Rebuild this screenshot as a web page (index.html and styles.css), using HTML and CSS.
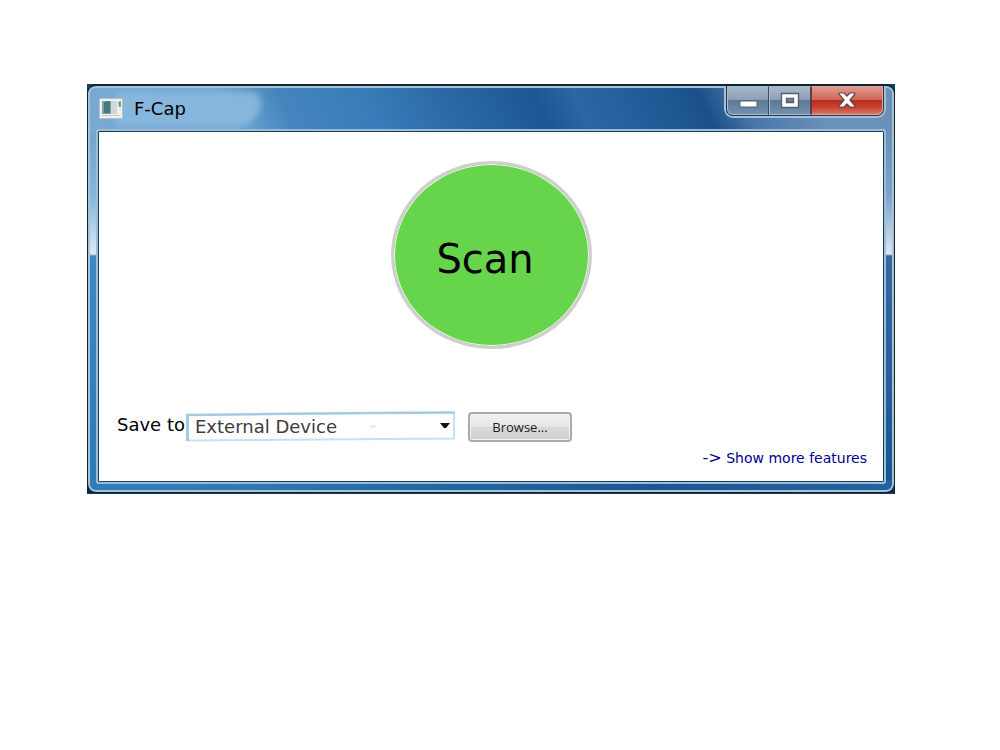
FILE: index.html
```html
<!DOCTYPE html>
<html lang="en">
<head>
<meta charset="utf-8">
<title>F-Cap</title>
<link rel="stylesheet" href="styles.css">
</head>
<body>
<main class="window">
  <div class="frame">
    <header class="titlebar">
      <div class="caption">
        <svg class="app-icon" width="24" height="22" viewBox="0 0 24 22" aria-hidden="true">
          <rect x="0.5" y="0.5" width="23" height="20" rx="1" fill="#edf0ef" stroke="#b9c0c4"/>
          <path d="M3 3h9v13H3z" fill="#7ba0ac"/>
          <path d="M5 4l6-1v12H5z" fill="#457b7c"/>
          <rect x="12" y="3" width="6" height="13" fill="#d3d6da"/>
          <path d="M19 4l3-1v6h-2z" fill="#70a28c"/>
          <path d="M3 17.500h18" stroke="#c5cacc"/>
        </svg>
        <h1 class="title">F-Cap</h1>
      </div>
      <div class="controls">
        <button class="control minimize" type="button" aria-label="Minimize">
          <svg width="20" height="18" viewBox="0 0 20 18"><rect x="2" y="10" width="17" height="6" rx="1" fill="#fff" stroke="#56606f"/></svg>
        </button>
        <button class="control maximize" type="button" aria-label="Maximize">
          <svg width="20" height="18" viewBox="0 0 20 18"><path fill-rule="evenodd" d="M1.500 2.500h17v14h-17zM6.500 7.500v4h7v-4z" fill="#fff" stroke="#56606f" stroke-width="1.400"/></svg>
        </button>
        <button class="control close" type="button" aria-label="Close">
          <svg width="20" height="18" viewBox="0 0 20 18"><path d="M2 2h5l3 3L13 2h5v1l-5 6 5 6v1h-5l-3-3-3 3H2v-1l5-6-5-6z" fill="#fff" stroke="#6b4350" stroke-width="1.200" stroke-linejoin="round"/></svg>
        </button>
      </div>
    </header>
    <section class="client">
      <button class="scan" type="button">Scan</button>
      <form class="save-row">
        <label class="save-label" for="target">Save to</label>
        <div class="picker">
          <svg class="picker-edge" viewBox="0 0 269 31" preserveAspectRatio="none" aria-hidden="true">
            <path d="M2 29.500L268 27.500V2" fill="none" stroke="#c3e1f2" stroke-width="2"/>
            <path d="M1 4L80 3 190 2 269 1.500" fill="none" stroke="#a5cae1" stroke-width="2.500"/>
            <path d="M1.500 3V30" stroke="#a5cae1" stroke-width="3"/>
            <path d="M183 14h8l-4 4z" fill="#eeecec"/>
          </svg>
          <select class="select" id="target"><option>External Device</option></select>
          <svg class="arrow" width="10" height="6" viewBox="0 0 10 6" aria-hidden="true"><path d="M0 0h10L6 5H4z" fill="#111"/></svg>
        </div>
        <button class="browse" type="button">Browse...</button>
      </form>
      <a class="more" href="#"><span class="more-arrow">-&gt;</span> Show more features</a>
    </section>
  </div>
</main>
</body>
</html>
```
FILE: styles.css
```css
* { box-sizing: border-box; }

body {
  margin: 0;
  padding: 84px 105px 84px 87px;
  background: #fff;
  color: #000;
  font-family: "DejaVu Sans", sans-serif;
  font-size: 18px;
}

button, select { font-family: inherit; margin: 0; }

.window {
  background: linear-gradient(#123f70, #0b2b50);
  border-bottom: 1px solid #163a5c;
}

.frame {
  border: 1px solid #12232f;
  border-top-width: 2px;
  border-radius: 9px;
  padding: 0 10px 10px;
  background:
    linear-gradient(90deg, #2e7dbc, #2f78b4 20%, #2468a4 40%, #1b5796 70%, #2362a0) bottom / 100% 12px no-repeat,
    linear-gradient(65deg, #78a9d2 0, #73a8d3 18%, #4585be 25%, #387db9 35%, #2967a5 46%, #1d5794 56%, #2b66a5 61%, #1f5892 72%, #1a508a 76%, #4876aa 81%, #6b91b8 90%, #6990b7 100%) top / 100% 46px no-repeat,
    linear-gradient(#75a4cc 46px, #84b5dc 110px, #dce9f5 168px, #3e88c3 170px, #2c79b9) left / 50% 100% no-repeat,
    linear-gradient(#6990b7 46px, #7ba5ca 110px, #dce6f3 168px, #3569a5 170px, #195391) right / 50% 100% no-repeat;
  box-shadow: inset 0 0 0 2px #a9c3d6;
}

.titlebar {
  display: flex;
  justify-content: space-between;
  align-items: flex-start;
  height: 45px;
}

.caption {
  position: relative;
  isolation: isolate;
  display: flex;
  align-items: center;
  gap: 11px;
  width: 170px;
  height: 45px;
  padding-left: 1px;
}

.caption::before {
  content: "";
  position: absolute;
  z-index: -1;
  inset: 6px 7px 4px 16px;
  background: #87b6dc;
  border-radius: 6px 12px 30px 6px;
  filter: blur(3px);
}

.title { margin: 0; font-size: 18px; font-weight: 400; line-height: 22px; }

.controls {
  display: flex;
  height: 30px;
  border: 1px solid #25394e;
  border-top: 0;
  border-radius: 0 0 7px 7px;
  box-shadow: 0 0 0 2px #a5c0d6;
  clip-path: inset(0 -2px -2px -2px);
}

.control {
  display: flex;
  align-items: center;
  justify-content: center;
  width: 42px;
  padding: 0 0 2px;
  border: 1px solid #a7bacb;
  border-right: 1px solid #3b4c60;
  background: linear-gradient(#a8b9c9, #8ba0b7 47%, #5f7995 50%, #7191b0);
}

.minimize { border-radius: 0 0 0 6px; }

.close {
  width: 72px;
  border: 1px solid #dea69b;
  border-left-color: #842e29;
  border-radius: 0 0 6px 0;
  background: linear-gradient(#df9b8e, #cf6555 47%, #b52d20 50%, #c64330 75%, #d77663);
}

.client {
  display: flex;
  flex-direction: column;
  padding: 29px 16px 14px 18px;
  background: #fff;
  border: 1px solid #193e60;
  box-shadow: 0 0 0 2px #9dbdd5;
  border-radius: 1px;
}

.scan {
  align-self: center;
  width: 201px;
  height: 188px;
  margin-right: 2px;
  padding: 8px 12px 0 0;
  border: 3px solid #d0cece;
  border-radius: 50%;
  background: #66d54c;
  box-shadow: inset 0 0 0 1px #f4faf3;
  color: #000;
  font-size: 40px;
}

.save-row {
  display: flex;
  align-items: center;
  margin-top: 62px;
}

.save-label { width: 69px; padding-bottom: 4px; white-space: nowrap; }

.picker { position: relative; width: 269px; height: 31px; margin-right: 13px; }

.picker-edge { position: absolute; inset: 0; width: 100%; height: 100%; }

.select {
  position: relative;
  appearance: none;
  width: 100%;
  height: 100%;
  padding: 0 24px 0 9px;
  border: 0;
  background: transparent;
  color: #403c3c;
  font-size: 18px;
}

.arrow { position: absolute; right: 5px; top: 12px; pointer-events: none; }

.browse {
  width: 104px;
  height: 30px;
  padding: 0;
  border: 2px solid #aaa;
  border-radius: 4px;
  background: linear-gradient(#f0f0f0, #e6e6e6 48%, #d9d9d9 52%, #cfcfcf);
  box-shadow: inset 0 0 0 1px #f3f3f3;
  color: #222228;
  font-family: "Open Sans", sans-serif;
  font-size: 13px;
}

.more {
  align-self: flex-end;
  margin-top: 7px;
  color: #00008f;
  font-size: 14px;
  line-height: 18px;
  text-decoration: none;
}

.more-arrow { font-size: 16px; }
```
